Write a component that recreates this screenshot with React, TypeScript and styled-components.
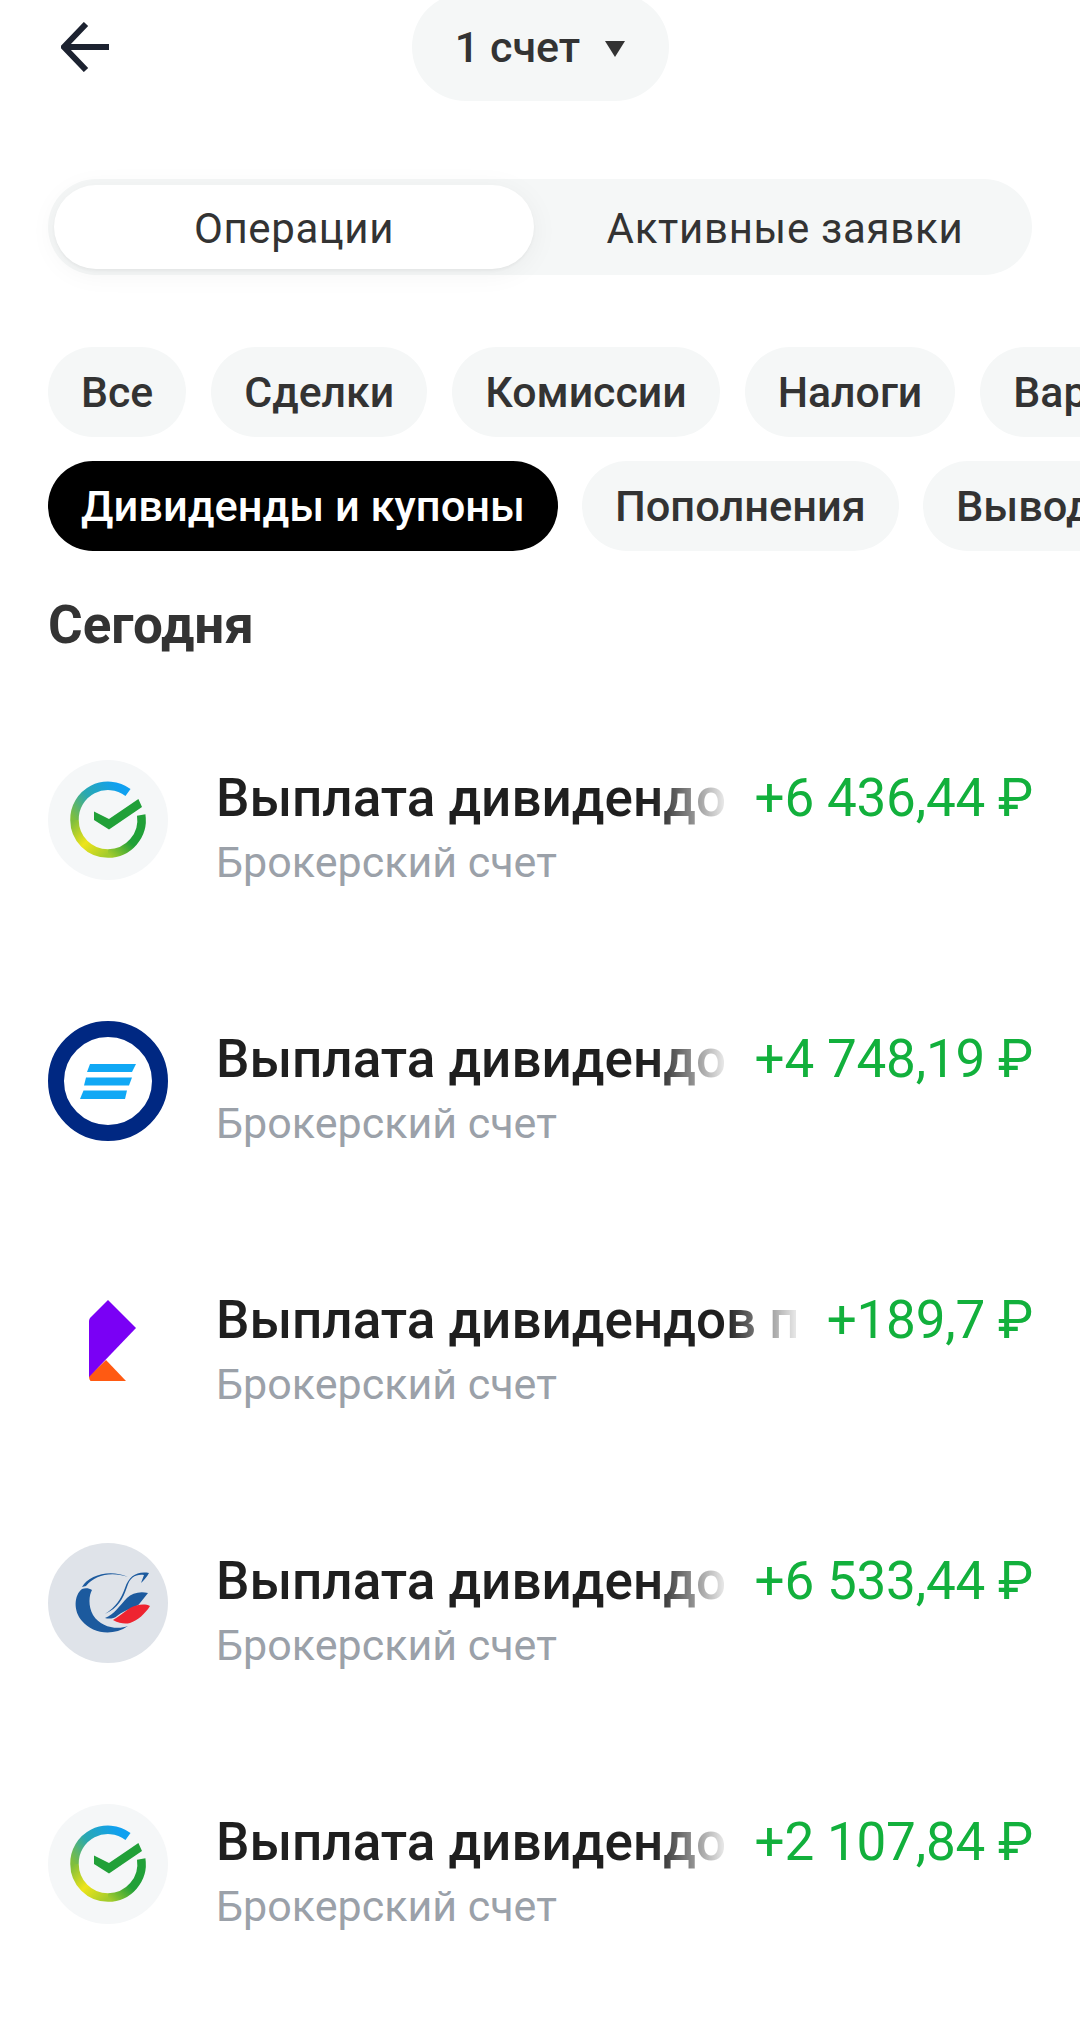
import React from "react";
import styled, { createGlobalStyle } from "styled-components";

const Global = createGlobalStyle`
  html, body { margin: 0; padding: 0; background: #fff; height: 2020px; overflow: hidden; }
  body { font-family: Roboto, "Noto Sans", sans-serif; }
`;

const Page = styled.div`
  width: 1080px;
  height: 2020px;
  overflow: hidden;
  display: flex;
  flex-direction: column;
`;

const Header = styled.header`
  height: 101px;
  padding: 0 48px;
  display: grid;
  grid-template-columns: 1fr auto 1fr;
  align-items: start;
  flex: none;
`;

const BackButton = styled.button`
  width: 72px;
  height: 94px;
  padding: 0 0 0 13px;
  border: 0;
  background: none;
  display: flex;
  align-items: center;
  justify-content: flex-start;
`;

const AccountPill = styled.div`
  margin-top: -7px;
  height: 108px;
  width: 257px;
  box-sizing: border-box;
  border-radius: 54px;
  background: #f5f7f7;
  display: flex;
  align-items: center;
  justify-content: center;
  gap: 25px;
  font-size: 43px;
  font-weight: 500;
  color: #333;
`;

const Caret = styled.span`
  width: 0;
  height: 0;
  margin-top: 4px;
  border-left: 10px solid transparent;
  border-right: 10px solid transparent;
  border-top: 16px solid #333;
`;

const Tabs = styled.div`
  margin: 78px 48px 0;
  height: 96px;
  box-sizing: border-box;
  padding: 6px;
  border-radius: 48px;
  background: #f5f7f7;
  display: flex;
  flex: none;
`;

const Tab = styled.div<{ $active?: boolean }>`
  width: ${(p) => (p.$active ? "480px" : "auto")};
  flex: ${(p) => (p.$active ? "none" : "1")};
  padding: 2px 0 0 ${(p) => (p.$active ? "0" : "10px")};
  box-sizing: border-box;
  border-radius: 42px;
  display: flex;
  align-items: center;
  justify-content: center;
  font-size: 42px;
  letter-spacing: ${(p) => (p.$active ? "0.6px" : "0.7px")};
  color: #333;
  background: ${(p) => (p.$active ? "#fff" : "transparent")};
  box-shadow: ${(p) => (p.$active ? "0 4px 28px rgba(0,0,0,0.05), 0 2px 3px rgba(0,0,0,0.04)" : "none")};
`;

const ChipRow = styled.div<{ $top: number; $size: number; $gap: number }>`
  margin-top: ${(p) => p.$top}px;
  padding-left: 48px;
  display: flex;
  gap: ${(p) => p.$gap}px;
  overflow: hidden;
  flex: none;
  font-size: ${(p) => p.$size}px;
`;

const Chip = styled.div<{ $active?: boolean }>`
  height: 90px;
  flex: none;
  padding: 0 33px;
  border-radius: 45px;
  display: flex;
  align-items: center;
  font-weight: 500;
  white-space: nowrap;
  color: ${(p) => (p.$active ? "#fff" : "#333")};
  background: ${(p) => (p.$active ? "#000" : "#f5f7f7")};
`;

const DayTitle = styled.h2`
  margin: 44px 0 0 48px;
  height: 60px;
  line-height: 60px;
  font-size: 53px;
  font-weight: 700;
  color: #333;
  flex: none;
`;

const List = styled.div`
  margin-top: 105px;
  padding: 0 48px;
  display: flex;
  flex-direction: column;
  gap: 141px;
`;

const Row = styled.div`
  height: 120px;
  display: flex;
  align-items: flex-start;
`;

const LogoWrap = styled.div`
  width: 120px;
  height: 120px;
  flex: none;
  margin-right: 48px;
`;

const Texts = styled.div`
  flex: 1;
  min-width: 0;
  padding-top: 6px;
  display: flex;
  flex-direction: column;
`;

const Title = styled.div`
  font-size: 53px;
  line-height: 64px;
  font-weight: 500;
  color: #1f1f1f;
  white-space: nowrap;
  overflow: hidden;
  -webkit-mask-image: linear-gradient(to right, #000 calc(100% - 70px), rgba(0, 0, 0, 0.1) 100%);
  mask-image: linear-gradient(to right, #000 calc(100% - 70px), rgba(0, 0, 0, 0.1) 100%);
`;

const Sub = styled.div`
  margin-top: 7px;
  font-size: 43px;
  line-height: 50px;
  color: #9ba1a9;
  white-space: nowrap;
`;

const Amount = styled.div`
  flex: none;
  margin: 6px -1px 0 31px;
  font-size: 53px;
  line-height: 64px;
  letter-spacing: -0.2px;
  color: #12b03c;
  white-space: nowrap;
`;

const Svg = styled.svg`
  display: block;
`;

const BackIcon = () => (
  <Svg width="48" height="50" viewBox="0 0 48 50" fill="none" stroke="#1c2230" strokeWidth="6">
    <path d="M48 25H4" />
    <path d="M25 2 3 25l22 23" />
  </Svg>
);

const SberLogo = ({ id }: { id: string }) => (
  <Svg width="120" height="120" viewBox="0 0 120 120" fill="none">
    <defs>
      <linearGradient id={`${id}a`} gradientUnits="userSpaceOnUse" x1="70" y1="26" x2="26" y2="60">
        <stop offset="0" stopColor="#10a0f0" />
        <stop offset="0.55" stopColor="#2aa8b0" />
        <stop offset="1" stopColor="#7fbe3c" />
      </linearGradient>
      <linearGradient id={`${id}b`} gradientUnits="userSpaceOnUse" x1="26" y1="60" x2="60" y2="94">
        <stop offset="0" stopColor="#7fbe3c" />
        <stop offset="0.5" stopColor="#eee41a" />
        <stop offset="1" stopColor="#a4cc2c" />
      </linearGradient>
      <linearGradient id={`${id}c`} gradientUnits="userSpaceOnUse" x1="60" y1="94" x2="94" y2="60">
        <stop offset="0" stopColor="#a4cc2c" />
        <stop offset="0.5" stopColor="#21a038" />
        <stop offset="1" stopColor="#21a038" />
      </linearGradient>
    </defs>
    <circle cx="60" cy="60" r="60" fill="#f5f7f8" />
    <g strokeWidth="8.5">
      <path d="M80 32.5A33.5 33.5 0 0 0 26.5 60" stroke={`url(#${id}a)`} />
      <path d="M26.5 60A33.5 33.5 0 0 0 60 93.5" stroke={`url(#${id}b)`} />
      <path d="M60 93.5A33.5 33.5 0 0 0 93.2 55" stroke={`url(#${id}c)`} />
    </g>
    <path d="M46 51.5V60l15 9.5 33-22.5-3.6-8-29.4 20z" fill="#21a038" />
  </Svg>
);

const BlueLogo = () => (
  <Svg width="120" height="120" viewBox="0 0 120 120">
    <circle cx="60" cy="60" r="52" fill="#fff" stroke="#002882" strokeWidth="16" />
    <g fill="#10a8f5">
      <path d="M42 43h46l-4 8H39z" />
      <path d="M38 56.5h46l-3 8H36z" />
      <path d="M35.5 69.5H79l-2 8.5H32z" />
    </g>
  </Svg>
);

const RocketLogo = () => (
  <Svg width="120" height="120" viewBox="0 0 120 120">
    <path d="M43 99h35L58 78 41 94c0 3 1 5 2 5z" fill="#ff5a12" />
    <path d="M60 18l28 28-47 49V39c0-1 .5-2 1-3z" fill="#7a00f5" />
  </Svg>
);

const RusLogo = () => (
  <Svg width="120" height="120" viewBox="0 0 120 120" fill="none">
    <circle cx="60" cy="60" r="60" fill="#dfe3e9" />
    <path d="M34 46C26 52 25 68 34 78c10 12 30 16 46 5-10 4-27 2-35-11-5-9-4-20-1-25-3-2-7-2-10-1z" fill="#1c5a9e" />
    <path d="M34 44c7-12 28-18 46-10-17-6-33-2-42 9z" fill="#1c5a9e" />
    <path d="M101 30c-12-2-20 3-24 15-4 11-9 19-20 26 13-6 18-15 22-27 3-10 9-13 17-12l-3 8c2-2 6-6 8-10z" fill="#1c5a9e" />
    <path d="M100 50c-8-2-16 0-21 5-7 7-13 17-22 20 3 1 9 1 12-2 9-7 21-9 23-13z" fill="#1c5a9e" />
    <path d="M102 63c-6-3-14-1-20 2-6 4-12 9-17 12 7 4 13 4 17 3 8-3 15-9 20-17z" fill="#ee2430" />
  </Svg>
);

const rows = [
  { logo: <SberLogo id="s1" />, amount: "+6 436,44 ₽" },
  { logo: <BlueLogo />, amount: "+4 748,19 ₽" },
  { logo: <RocketLogo />, amount: "+189,7 ₽" },
  { logo: <RusLogo />, amount: "+6 533,44 ₽" },
  { logo: <SberLogo id="s2" />, amount: "+2 107,84 ₽" },
];

export default function App() {
  return (
    <Page>
      <Global />
      <Header>
        <BackButton aria-label="Назад">
          <BackIcon />
        </BackButton>
        <AccountPill>
          1 счет
          <Caret />
        </AccountPill>
      </Header>
      <Tabs>
        <Tab $active>Операции</Tab>
        <Tab>Активные заявки</Tab>
      </Tabs>
      <ChipRow $top={72} $size={42.8} $gap={25}>
        <Chip>Все</Chip>
        <Chip>Сделки</Chip>
        <Chip>Комиссии</Chip>
        <Chip>Налоги</Chip>
        <Chip>Вариационная маржа</Chip>
      </ChipRow>
      <ChipRow $top={24} $size={43.4} $gap={24}>
        <Chip $active>Дивиденды и купоны</Chip>
        <Chip>Пополнения</Chip>
        <Chip>Выводы</Chip>
      </ChipRow>
      <DayTitle>Сегодня</DayTitle>
      <List>
        {rows.map((r, i) => (
          <Row key={i}>
            <LogoWrap>{r.logo}</LogoWrap>
            <Texts>
              <Title>Выплата дивидендов по акциям</Title>
              <Sub>Брокерский счет</Sub>
            </Texts>
            <Amount>{r.amount}</Amount>
          </Row>
        ))}
      </List>
    </Page>
  );
}
